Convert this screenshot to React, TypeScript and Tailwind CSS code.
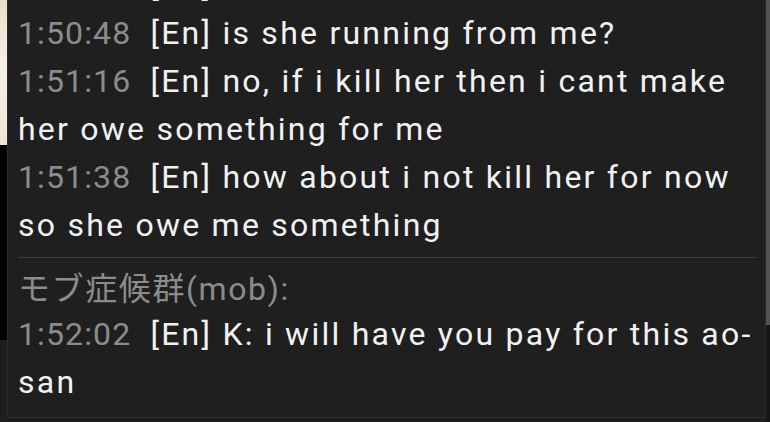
import React from 'react';

type Msg = { time: string; text: string };

const before: Msg[] = [
  { time: '1:50:21', text: '[En] ok then' },
  { time: '1:50:48', text: '[En] is she running from me?' },
  { time: '1:51:16', text: '[En] no, if i kill her then i cant make her owe something for me' },
  { time: '1:51:38', text: '[En] how about i not kill her for now so she owe me something' },
];

const after: Msg[] = [
  { time: '1:52:02', text: '[En] K: i will have you pay for this ao-san' },
];

const Line: React.FC<{ msg: Msg }> = ({ msg }) => (
  <p className="leading-[48px] text-[32px] text-[#f2f2f2] tracking-[0.07em]">
    <span className="text-[#8c8c8c] tracking-[0.035em] mr-[9px]">{msg.time}</span> {msg.text}
  </p>
);

const App: React.FC = () => {
  return (
    <div
      className="w-[770px] h-[422px] overflow-hidden flex bg-[#1c1c1c]"
      style={{ fontFamily: 'Roboto, "Noto Sans CJK JP", sans-serif' }}
    >
      <div className="w-[7px] flex flex-col shrink-0">
        <div className="h-[145px] bg-gradient-to-b from-[#e9dfcc] via-[#f6f1e8] to-[#ece4d4]" />
        <div className="h-[195px] bg-black" />
        <div className="flex-1 bg-[#1e1e1e]" />
      </div>

      <div className="flex-1 h-[418px] bg-[#1f1f1f] border-x border-b border-[#2b2b2b] pl-[10px] pr-[5px] overflow-hidden">
        <div className="-mt-[39px]">
          {before.map((m) => (
            <Line key={m.time} msg={m} />
          ))}
        </div>
        <div className="mt-[8px] mr-[3px] h-px bg-[#3d3d3d]" />
        <p className="mt-[10px] leading-[42px] text-[32px] text-[#8c8c8c] tracking-[0.05em]">モブ症候群(mob):</p>
        {after.map((m) => (
          <Line key={m.time} msg={m} />
        ))}
      </div>

      <div className="w-[4px] flex flex-col shrink-0">
        <div className="h-[325px] bg-[#525252]" />
        <div className="flex-1 bg-[#161616]" />
      </div>
    </div>
  );
};

export default App;
